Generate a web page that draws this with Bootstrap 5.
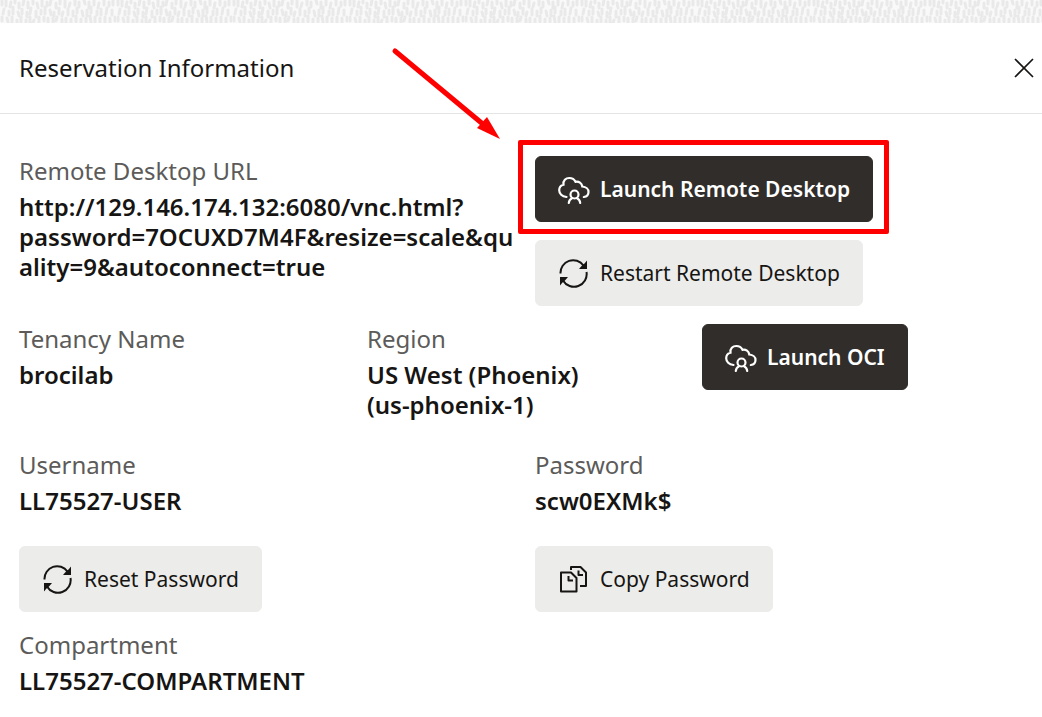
<!DOCTYPE html>
<html lang="en">
<head>
<meta charset="utf-8">
<meta name="viewport" content="width=device-width, initial-scale=1">
<title>Reservation Information</title>
<link href="https://cdn.jsdelivr.net/npm/bootstrap@5.3.0/dist/css/bootstrap.min.css" rel="stylesheet">
<style>
  body { font-family: "Noto Sans", "Open Sans", sans-serif; font-size: 24px; line-height: 30px; color: #161513; background: #fff; }
  .texture { height: 23px; background: #f9f9f9; }
  .panel-head { padding: 30px 8px 30px 19px; border-bottom: 1px solid #e4e4e4; }
  .panel-head h1 { font-size: 24px; line-height: 30px; font-weight: 400; }
  .close-btn { width: 22px; height: 22px; }
  .panel-body { padding: 42px 0 18px 19px; gap: 18px; }
  .pair { display: grid; grid-template-columns: 516fr 507fr; row-gap: 30px; }
  .trio { display: grid; grid-template-columns: 348fr 335fr 340fr; padding-bottom: 12px; }
  .term { color: #5c5b59; font-weight: 400; margin-bottom: 6px; }
  .term + dd { margin: 0; font-weight: 600; overflow-wrap: anywhere; }
  .actions { gap: 18px; }
  .action { --bs-btn-padding-x: 22px; --bs-btn-padding-y: 17px; --bs-btn-font-size: 21px; --bs-btn-line-height: 30px; --bs-btn-border-radius: 6px; display: inline-flex; align-items: center; gap: 10px; white-space: nowrap; }
  .action svg { width: 32px; height: 30px; flex: none; }
  .action-dark { --bs-btn-color: #fff; --bs-btn-bg: #312d2a; --bs-btn-border-color: #312d2a; --bs-btn-hover-color: #fff; --bs-btn-hover-bg: #46413d; font-weight: 600; }
  .action-soft { --bs-btn-color: #161513; --bs-btn-bg: #ececea; --bs-btn-border-color: #ececea; --bs-btn-hover-bg: #dfdfdc; }
  .callout-frame { position: absolute; inset: -16px -16px -12px -17px; border: 5px solid #f00; border-radius: 2px; pointer-events: none; }
  .callout-arrow { position: absolute; left: -145px; top: -110px; width: 112px; height: 96px; pointer-events: none; }
</style>
<script src="https://cdn.jsdelivr.net/npm/bootstrap@5.3.0/dist/js/bootstrap.bundle.min.js"></script>
</head>
<body>
<svg class="texture d-block w-100" aria-hidden="true">
  <defs>
    <pattern id="dashes" width="116" height="23" patternUnits="userSpaceOnUse">
      <path fill="none" stroke="#e9e9e9" stroke-width="3" stroke-linecap="round" d="M2 1v4M6 0v6M11 2l-1 5M15 0v3M19 3v5M24 0l-1 5M28 2v6M33 0v4M37 3l1 5M42 0v6M47 2v4M51 0l-1 5M56 3v5M60 0v4M65 1v6M70 3l-1 4M75 0v5M79 2v5M84 0l1 4M89 2v6M94 0v5M99 3l-1 5M104 0v5M109 2v4M113 0v5M4 9l-1 5M9 11v4M13 7v7M18 12l1 4M22 9v5M27 12v5M31 8l-1 6M36 11v6M41 10v4M45 7v7M50 10l1 5M54 12v4M59 8v6M63 12l-1 4M68 9v6M73 11v5M77 8v5M82 11l1 5M87 10v6M91 7v6M97 11v4M101 9v6M107 8l-1 6M112 10v5M2 17v4M7 18l1 4M12 17v6M17 20v3M21 17v5M26 20v3M30 17v6M34 20l-1 3M39 17v6M44 17v4M48 18v5M53 18v5M57 17l-1 4M62 19v4M66 18v5M71 19v4M76 16v6M81 19v4M86 18v4M90 16l1 6M95 17v6M100 18v4M105 17v6M110 18v5M115 17v4"/>
    </pattern>
  </defs>
  <rect width="100%" height="23" fill="url(#dashes)"/>
</svg>
<svg class="d-none" aria-hidden="true">
  <symbol id="cloud-user" viewBox="0 0 32 30">
    <g fill="none" stroke="currentColor" stroke-width="2.2" stroke-linecap="round">
      <path d="M8.500 23C4 22.500 1.200 19.600 1.200 16.300c0-3 1.600-5 4.300-5.600C4.800 6.500 7.800 4 11.300 4c3 0 5 1.300 6.200 3.800 3.400-.6 6.300 1.200 6.800 4.700 3.700.3 6.200 2.500 6.200 5.400 0 2.700-1.800 4.700-4.700 5.100"/>
      <circle cx="16.500" cy="20.500" r="4"/><path d="M10.800 29c.2-2.200 1.400-3.900 3.200-4.700M22.200 29c-.2-2.200-1.400-3.900-3.200-4.700"/>
    </g>
  </symbol>
  <symbol id="cycle" viewBox="0 0 32 30">
    <path fill="none" stroke="currentColor" stroke-width="2" d="M2.500 15.500A12.700 12.700 0 0 1 25.500 7.500M28.500 14A12.700 12.700 0 0 1 5 22.500"/>
    <path fill="currentColor" d="M29 2.500V11H21l3-3.500 2.500-2zM2 27.500V19h8l-3 3.500-2.500 2z"/>
  </symbol>
  <symbol id="pages" viewBox="0 0 32 30">
    <path fill="none" stroke="currentColor" stroke-width="2" stroke-linejoin="round" d="M3 8.500h10l5.500 5.500v13.500H3zM10.500 12v4.500h4.500M13 6V3h9.500l5.500 5.500v13.500h-6M20.500 6.500V11H25"/>
  </symbol>
</svg>

<main>
  <header class="panel-head d-flex align-items-center justify-content-between">
    <h1 class="m-0">Reservation Information</h1>
    <button type="button" class="close-btn btn p-0 border-0 d-flex" aria-label="Close">
      <svg viewBox="0 0 22 22" width="22" height="22" aria-hidden="true"><path d="M3 2l18 18M21 2L3 20" stroke="#161513" stroke-width="1.700"/></svg>
    </button>
  </header>

  <div class="panel-body d-flex flex-column">
    <section class="pair">
      <dl class="m-0"><dt class="term">Remote Desktop URL</dt><dd>http://129.146.174.132:6080/vnc.html?<br>password=7OCUXD7M4F&amp;resize=scale&amp;qu<br>ality=9&amp;autoconnect=true</dd></dl>
      <div class="d-flex flex-column align-items-start actions">
        <div class="position-relative d-flex">
          <button type="button" class="btn action action-dark"><svg aria-hidden="true"><use href="#cloud-user"/></svg>Launch Remote Desktop</button>
          <span class="callout-frame"></span>
          <svg class="callout-arrow" viewBox="0 0 112 96" aria-hidden="true"><path d="M5 5L94 79" stroke="#f00" stroke-width="5" stroke-linecap="round"/><path d="M97 71L110 93 87 82z" fill="#f00"/></svg>
        </div>
        <button type="button" class="btn action action-soft"><svg aria-hidden="true"><use href="#cycle"/></svg>Restart Remote Desktop</button>
      </div>
    </section>

    <section class="trio">
      <dl class="m-0"><dt class="term">Tenancy Name</dt><dd>brocilab</dd></dl>
      <dl class="m-0"><dt class="term">Region</dt><dd>US West (Phoenix)<br>(us-phoenix-1)</dd></dl>
      <div><button type="button" class="btn action action-dark"><svg aria-hidden="true"><use href="#cloud-user"/></svg>Launch OCI</button></div>
    </section>

    <section class="pair">
      <dl class="m-0"><dt class="term">Username</dt><dd>LL75527-USER</dd></dl>
      <dl class="m-0"><dt class="term">Password</dt><dd>scw0EXMk$</dd></dl>
      <div class="d-flex"><button type="button" class="btn action action-soft"><svg aria-hidden="true"><use href="#cycle"/></svg>Reset Password</button></div>
      <div class="d-flex"><button type="button" class="btn action action-soft"><svg aria-hidden="true"><use href="#pages"/></svg>Copy Password</button></div>
    </section>

    <dl class="m-0"><dt class="term">Compartment</dt><dd>LL75527-COMPARTMENT</dd></dl>
  </div>
</main>
</body>
</html>
